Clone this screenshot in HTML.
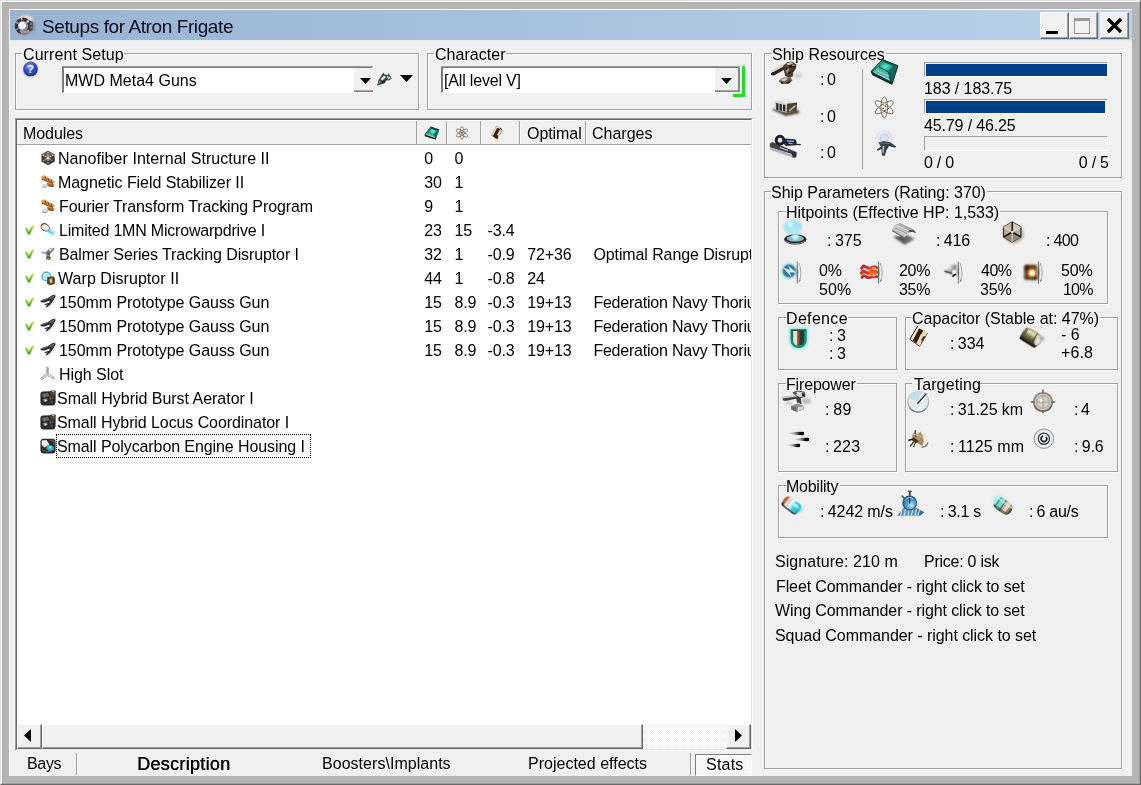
<!DOCTYPE html>
<html><head><meta charset="utf-8"><title>Setups for Atron Frigate</title>
<style>
html,body{margin:0;padding:0}
body{width:1141px;height:785px;position:relative;overflow:hidden;background:#b4b4b4;font-family:"Liberation Sans",sans-serif;font-size:16px;color:#000}
div{box-sizing:content-box}
.abs{position:absolute}
.grp{position:absolute;border:1px solid #a0a0a0;box-shadow:1px 1px 0 #fff, inset 1px 1px 0 #fff}
.glabel{position:absolute;background:#f0f0f0;padding:0 1px;font-size:16px;line-height:18px;white-space:pre}
.btn{position:absolute;background:#f0f0f0;box-sizing:border-box;border:1px solid;border-color:#fff #696969 #696969 #fff;box-shadow:inset -1px -1px 0 #a0a0a0, inset 1px 1px 0 #f0f0f0}
.row{position:absolute;left:17px;height:24px;width:734px}
svg{position:absolute;overflow:visible}
</style></head><body>
<div id="w" style="position:absolute;left:0;top:0;width:1141px;height:785px;will-change:transform;overflow:hidden">

<div class="abs" style="left:0;top:0;width:1141px;height:785px;background:#b4b4b4"></div>
<div class="abs" style="left:0;top:0;width:1140px;height:784px;border-left:1px solid #e3e3e3;border-top:1px solid #e3e3e3;border-right:1px solid #696969;border-bottom:1px solid #696969;box-sizing:border-box;width:1141px;height:785px"></div>
<div class="abs" style="left:1px;top:1px;width:1139px;height:783px;box-sizing:border-box;border-left:1px solid #fff;border-top:1px solid #fff;border-right:1px solid #a0a0a0;border-bottom:1px solid #a0a0a0"></div>
<div class="abs" style="left:9px;top:9px;width:1123px;height:767px;background:#f0f0f0;border-left:1px solid #fff;border-top:1px solid #fff;box-sizing:border-box"></div>
<div class="abs" style="left:10px;top:10px;width:1122px;height:30px;background:linear-gradient(90deg,#99b4d1 0%,#a3bedc 35%,#b9d1ea 100%)"></div>
<div class="abs" style="left:10px;top:40px;width:1122px;height:1px;background:#e4ebf3"></div>
<svg style="left:10px;top:10px" width="30" height="30" viewBox="10 10 30 30"><ellipse cx="25" cy="25" rx="9.4" ry="10" fill="#77707a" opacity="0.55" filter="url(#f12)"/><path d="M18 18 Q25 11.6 33 17.6 L33 22.4 Q25 17 18 21.4Z" fill="#e4dcde" filter="url(#f8)"/><circle cx="23.2" cy="26" r="6.7" fill="none" stroke="#3a3030" stroke-width="3.4" stroke-dasharray="5 1.1" filter="url(#f5)"/><circle cx="22.2" cy="25.6" r="3.8" fill="#f2f3fa" filter="url(#f5)"/><path d="M19.4 31.8 Q24 35.6 30 31.8 L28.6 29.4 Q24 32 20.8 29.8Z" fill="#ac9484" filter="url(#f5)"/><path d="M28.8 20.4 L32.6 21.8 L32.6 30 L29.2 31.2Z" fill="#4a3e3e" filter="url(#f5)"/><rect x="30.4" y="23" width="1.6" height="1.8" fill="#9a8e8e"/><rect x="30.4" y="26.6" width="1.6" height="1.8" fill="#8a7e7e"/><circle cx="17.4" cy="22.6" r="1.1" fill="#9a8e90" filter="url(#f3)"/><circle cx="27.8" cy="21.6" r="1.2" fill="#d4cccc" filter="url(#f3)"/><ellipse cx="33.6" cy="27" rx="1.6" ry="4" fill="#6f7f96" opacity="0.6" filter="url(#f8)"/></svg>
<div style="position:absolute;left:42px;top:16px;font-size:19px;line-height:21px;white-space:pre;color:#0a0a1e;letter-spacing:-0.4px">Setups for Atron Frigate</div>
<div class="btn" style="left:1040px;top:12px;width:29px;height:27px"></div>
<div class="btn" style="left:1069px;top:12px;width:29px;height:27px"></div>
<div class="btn" style="left:1100px;top:12px;width:29px;height:27px"></div>
<div class="abs" style="left:1046px;top:31px;width:12px;height:3px;background:#000"></div>
<div class="abs" style="left:1074px;top:18px;width:16px;height:16px;box-sizing:border-box;border:1px solid #9a9a9a;border-top:3px solid #9a9a9a"></div>
<svg style="left:1106px;top:17px" width="17" height="17" viewBox="0 0 17 17"><path d="M2 2 L15 15 M15 2 L2 15" stroke="#000" stroke-width="3.2" fill="none"/></svg>
<div class="grp" style="left:15px;top:53px;width:402px;height:55px"></div>
<div class="abs" style="left:22px;top:53px;width:102px;height:2px;background:#f0f0f0"></div>
<div style="position:absolute;left:23px;top:46px;font-size:16px;line-height:18px;white-space:pre;letter-spacing:0.080px;transform:scaleY(1.045);transform-origin:0 14.5px;">Current Setup</div>
<svg style="left:21px;top:59px" width="20" height="20" viewBox="21 59 20 20"><defs><radialGradient id="gHelp" cx="42%" cy="32%" r="70%"><stop offset="0" stop-color="#93a8ec"/><stop offset="0.45" stop-color="#3c58c4"/><stop offset="1" stop-color="#1c2e8c"/></radialGradient></defs><ellipse cx="30.8" cy="70.6" rx="7" ry="6.6" fill="#9aa0b8" opacity="0.6" filter="url(#f8)"/><circle cx="30.5" cy="68.9" r="7.4" fill="url(#gHelp)" filter="url(#f3)"/><text x="30.6" y="73.2" text-anchor="middle" font-family="Liberation Sans, sans-serif" font-weight="bold" font-size="11.5" fill="#ffffff">?</text></svg>
<div class="abs" style="left:62px;top:66px;width:311px;height:27px;background:#fff;box-sizing:border-box;border-top:2px solid;border-left:2px solid;border-top-color:#7c7c7c;border-left-color:#7c7c7c;border-bottom:1px solid #fff;border-right:1px solid #fff"></div>
<div class="abs" style="left:62px;top:66px;width:311px;height:1px;background:#9a9a9a"></div>
<div class="abs" style="left:354px;top:68px;width:19px;height:24px;background:#f0f0f0;box-sizing:border-box;border-bottom:2px solid #7e7e7e"></div>
<div class="abs" style="left:354px;top:90px;width:19px;height:1px;background:#a8a8a8"></div>
<div style="position:absolute;left:65px;top:72px;font-size:16px;line-height:18px;white-space:pre;letter-spacing:0.013px;transform:scaleY(1.045);transform-origin:0 14.5px;">MWD Meta4 Guns</div>
<svg style="left:360px;top:78px" width="11" height="6" viewBox="0 0 11 6"><path d="M0 0H11L5.5 6Z" fill="#000"/></svg>
<svg style="left:376px;top:71px" width="16" height="16" viewBox="376 71 16 16"><g filter="url(#f3)"><path d="M377 85.6 L378.6 80 L381.4 75.6 L383.2 72.4 L384.6 74.6 L387.8 75 L388.6 73 L390 75.6 L391.8 78.4 L389.6 80.2 L386 80.6 L384.4 83.4 L380.4 84.6Z" fill="#3c4a45"/><path d="M380.6 79 L384 75.6 L386 77 L382.6 80.4Z" fill="#e2eae6"/><path d="M386.6 76 L389.6 76.4 L390.8 78.4 L388 79.4Z" fill="#b6beba"/><path d="M381 82.4 L385 79.6 L385.4 82.4Z" fill="#18261f"/><path d="M378.4 83.6 L380 81" stroke="#aab2ae" stroke-width="0.9"/></g></svg>
<svg style="left:400px;top:75px" width="13" height="7" viewBox="0 0 13 7"><path d="M0 0H13L6.5 7Z" fill="#000"/></svg>
<div class="grp" style="left:427px;top:53px;width:323px;height:55px"></div>
<div class="abs" style="left:434px;top:53px;width:72px;height:2px;background:#f0f0f0"></div>
<div style="position:absolute;left:435px;top:46px;font-size:16px;line-height:18px;white-space:pre;letter-spacing:0.045px;transform:scaleY(1.045);transform-origin:0 14.5px;">Character</div>
<div class="abs" style="left:441px;top:66px;width:299px;height:27px;background:#fff;box-sizing:border-box;border-top:2px solid;border-left:2px solid;border-top-color:#7c7c7c;border-left-color:#7c7c7c;border-bottom:1px solid #fff;border-right:1px solid #fff"></div>
<div class="abs" style="left:441px;top:66px;width:299px;height:1px;background:#9a9a9a"></div>
<div class="abs" style="left:715px;top:68px;width:25px;height:24px;background:#f0f0f0;box-sizing:border-box;border-bottom:2px solid #7e7e7e"></div>
<div class="abs" style="left:715px;top:90px;width:25px;height:1px;background:#a8a8a8"></div>
<div class="abs" style="left:738px;top:68px;width:2px;height:24px;background:#868686"></div>
<div style="position:absolute;left:444px;top:72px;font-size:16px;line-height:18px;white-space:pre;letter-spacing:-0.178px;transform:scaleY(1.045);transform-origin:0 14.5px;">[All level V]</div>
<svg style="left:721px;top:78px" width="11" height="6" viewBox="0 0 11 6"><path d="M0 0H11L5.5 6Z" fill="#000"/></svg>
<div class="abs" style="left:742px;top:66px;width:3px;height:31px;background:#1de01d"></div>
<div class="abs" style="left:733px;top:94px;width:12px;height:3px;background:#1de01d"></div>
<div class="abs" style="left:15px;top:118px;width:738px;height:633px;box-sizing:border-box;background:#fff;border:1px solid;border-color:#a0a0a0 #fff #fff #a0a0a0"></div>
<div class="abs" style="left:16px;top:119px;width:736px;height:631px;box-sizing:border-box;border:1px solid;border-color:#696969 #e3e3e3 #e3e3e3 #696969"></div>
<div class="abs" style="left:17px;top:120px;width:734px;height:25px;background:#f0f0f0;box-sizing:border-box;border-top:1px solid #fff;border-bottom:1px solid #a0a0a0"></div>
<div class="abs" style="left:416px;top:121px;width:1px;height:23px;background:#a0a0a0"></div>
<div class="abs" style="left:417px;top:121px;width:1px;height:23px;background:#fff"></div>
<div class="abs" style="left:446px;top:121px;width:1px;height:23px;background:#a0a0a0"></div>
<div class="abs" style="left:447px;top:121px;width:1px;height:23px;background:#fff"></div>
<div class="abs" style="left:480px;top:121px;width:1px;height:23px;background:#a0a0a0"></div>
<div class="abs" style="left:481px;top:121px;width:1px;height:23px;background:#fff"></div>
<div class="abs" style="left:519px;top:121px;width:1px;height:23px;background:#a0a0a0"></div>
<div class="abs" style="left:520px;top:121px;width:1px;height:23px;background:#fff"></div>
<div class="abs" style="left:585px;top:121px;width:1px;height:23px;background:#a0a0a0"></div>
<div class="abs" style="left:586px;top:121px;width:1px;height:23px;background:#fff"></div>
<div style="position:absolute;left:23px;top:125px;font-size:16px;line-height:18px;white-space:pre;letter-spacing:-0.072px;transform:scaleY(1.045);transform-origin:0 14.5px;">Modules</div>
<div style="position:absolute;left:527px;top:125px;font-size:16px;line-height:18px;white-space:pre;letter-spacing:-0.063px;transform:scaleY(1.045);transform-origin:0 14.5px;">Optimal</div>
<div style="position:absolute;left:592px;top:125px;font-size:16px;line-height:18px;white-space:pre;transform:scaleY(1.045);transform-origin:0 14.5px;">Charges</div>
<svg style="left:424px;top:125px" width="16" height="16" viewBox="0 0 16 16"><g filter="url(#f3)"><path d="M0.6 9.4 L6.6 1.4 L15.4 4.6 L11.6 14.6 L1.2 11.2Z" fill="#0e423a"/><path d="M4.4 7.6 L7.2 3.4 L13 5.6 L10.2 9.8Z" fill="#2fc09c"/><path d="M6.4 6.8 L8 4.6 L11 5.8 L9.4 8Z" fill="#62f0c8"/><path d="M1.2 9.4 L4.4 7.6 L10.2 9.8 L11.2 13.4Z" fill="#4fb0a2"/><path d="M2.6 9.6 L10.4 12.2" stroke="#b8f0e8" stroke-width="0.7"/><path d="M10.2 9.8 L13 5.6 L15 4.8 L11.6 13.8Z" fill="#156a5e"/><path d="M1 9.6 L6.6 1.8 L7.2 3.4 L4.4 7.6Z" fill="#237e70"/><path d="M6.6 1.6 L15.2 4.8 L13 5.6 L7.2 3.4Z" fill="#0f4a42"/><path d="M0.6 9.4 L1.2 11.2 L11.6 14.6 L11.2 13.2Z" fill="#0c2824"/></g></svg>
<svg style="left:454px;top:125px" width="16" height="16" viewBox="0 0 16 16"><g fill="none" stroke="#7a7068" stroke-width="0.8" filter="url(#f3)"><ellipse cx="8" cy="8" rx="1.9" ry="6.4"/><ellipse cx="8" cy="8" rx="6.6" ry="2.1" transform="rotate(33 8 8)"/><ellipse cx="8" cy="8" rx="6.6" ry="2.1" transform="rotate(-33 8 8)"/></g><circle cx="8" cy="8" r="1" fill="#5a4e44" filter="url(#f3)"/></svg>
<svg style="left:489px;top:125px" width="16" height="16" viewBox="0 0 16 16"><g filter="url(#f3)"><path d="M7.4 0.8 L11.4 2.4 L13.6 5 L8.4 14.6 L2.4 10.4Z" fill="#3a2412"/><path d="M7 1.4 L8.6 2 L3.8 11 L2.6 10.2Z" fill="#f4e4c4"/><path d="M7.4 0.8 L11.4 2.4 L10.8 3.8 L7.2 2.4Z" fill="#e8dcc8"/><path d="M11.2 4 L13.2 5.4 L10.4 9.4 L12.2 9.6 L8.6 14 L9.4 10.4 L8 10Z" fill="#f0e0c0"/></g></svg>
<svg style="left:40px;top:150px" width="16" height="16" viewBox="0 0 16 16"><g filter="url(#f3)"><path d="M8 0.8 L14.6 4.4 L14.6 11.6 L8 15.2 L1.4 11.6 L1.4 4.4Z" fill="#463c34"/><path d="M8 0.8 L14.6 4.4 L8 8 L1.4 4.4Z" fill="#6e645a"/><path d="M8 2 L8 14 M2.6 5 L13.4 11 M13.4 5 L2.6 11" stroke="#d6cebe" stroke-width="1.1" stroke-dasharray="1.6 0.9"/><circle cx="8" cy="8" r="1.4" fill="#e8e2d6"/><path d="M8 15.2 L14.6 11.6 L14.6 8 Z" fill="#2a221c" opacity="0.6"/></g></svg>
<div style="position:absolute;left:58px;top:150px;font-size:16px;line-height:18px;white-space:pre;letter-spacing:0.056px;transform:scaleY(1.045);transform-origin:0 14.5px;">Nanofiber Internal Structure II</div>
<div style="position:absolute;left:424.3px;top:150px;font-size:16px;line-height:18px;white-space:pre;letter-spacing:-0.15px;transform:scaleY(1.045);transform-origin:0 14.5px;">0</div>
<div style="position:absolute;left:454.5px;top:150px;font-size:16px;line-height:18px;white-space:pre;letter-spacing:-0.15px;transform:scaleY(1.045);transform-origin:0 14.5px;">0</div>
<svg style="left:40px;top:174px" width="16" height="16" viewBox="0 0 16 16"><g filter="url(#f3)"><path d="M1.2 2.6 L4 1.2 L15.2 7.4 L13 9.6 L1.8 5.2Z" fill="#d98a3a"/><path d="M2 3 L4 2 L13.6 7.4" fill="none" stroke="#f2c078" stroke-width="0.9"/><path d="M1.8 5.2 L13 9.6" fill="none" stroke="#5c300e" stroke-width="1"/><path d="M5 2.4 L6.2 5.6 M8 4 L9 7 M11 5.6 L11.8 8.6" stroke="#6a3a12" stroke-width="0.9"/><path d="M6.6 8.4 L15 10.8 L13.4 12.8 L7.4 11.6Z" fill="#c87a30"/><path d="M7.4 11.6 L13.4 12.8" stroke="#5c300e" stroke-width="0.9"/><path d="M9.6 9.4 L10 11.8 M12 10 L12.2 12.4" stroke="#6a3a12" stroke-width="0.8"/><ellipse cx="4.6" cy="12" rx="2.8" ry="2" fill="#d4d4d4"/><path d="M2 12.6 Q4.6 15 7.2 12.6 Q4.6 13.8 2 12.6Z" fill="#8c8c8c"/></g></svg>
<div style="position:absolute;left:58px;top:174px;font-size:16px;line-height:18px;white-space:pre;letter-spacing:-0.054px;transform:scaleY(1.045);transform-origin:0 14.5px;">Magnetic Field Stabilizer II</div>
<div style="position:absolute;left:424.3px;top:174px;font-size:16px;line-height:18px;white-space:pre;letter-spacing:-0.15px;transform:scaleY(1.045);transform-origin:0 14.5px;">30</div>
<div style="position:absolute;left:454.5px;top:174px;font-size:16px;line-height:18px;white-space:pre;letter-spacing:-0.15px;transform:scaleY(1.045);transform-origin:0 14.5px;">1</div>
<svg style="left:40px;top:198px" width="16" height="16" viewBox="0 0 16 16"><g filter="url(#f3)"><path d="M1.2 2.6 L4 1.2 L15.2 7.4 L13 9.6 L1.8 5.2Z" fill="#d98a3a"/><path d="M2 3 L4 2 L13.6 7.4" fill="none" stroke="#f2c078" stroke-width="0.9"/><path d="M1.8 5.2 L13 9.6" fill="none" stroke="#5c300e" stroke-width="1"/><path d="M5 2.4 L6.2 5.6 M8 4 L9 7 M11 5.6 L11.8 8.6" stroke="#6a3a12" stroke-width="0.9"/><path d="M6.6 8.4 L15 10.8 L13.4 12.8 L7.4 11.6Z" fill="#c87a30"/><path d="M7.4 11.6 L13.4 12.8" stroke="#5c300e" stroke-width="0.9"/><path d="M9.6 9.4 L10 11.8 M12 10 L12.2 12.4" stroke="#6a3a12" stroke-width="0.8"/><ellipse cx="4.9" cy="12.8" rx="3.3" ry="2.5" fill="#d6d6d6"/><path d="M1.8 13.4 Q4.9 16.4 8 13.4 Q4.9 15 1.8 13.4Z" fill="#8a8a8a"/></g></svg>
<div style="position:absolute;left:59px;top:198px;font-size:16px;line-height:18px;white-space:pre;letter-spacing:-0.116px;transform:scaleY(1.045);transform-origin:0 14.5px;">Fourier Transform Tracking Program</div>
<div style="position:absolute;left:424.3px;top:198px;font-size:16px;line-height:18px;white-space:pre;letter-spacing:-0.15px;transform:scaleY(1.045);transform-origin:0 14.5px;">9</div>
<div style="position:absolute;left:454.5px;top:198px;font-size:16px;line-height:18px;white-space:pre;letter-spacing:-0.15px;transform:scaleY(1.045);transform-origin:0 14.5px;">1</div>
<svg style="left:25px;top:225px" width="10" height="11" viewBox="0 0 10 11"><path d="M1.3 3.6 L3.9 8.4 L7.9 1.2" fill="none" stroke="url(#gChk)" stroke-width="2.5" stroke-linecap="round" stroke-linejoin="round" filter="url(#f3)"/><path d="M1.6 3.8 L3.6 7" fill="none" stroke="#d4f08c" stroke-width="0.8" stroke-linecap="round" opacity="0.8"/></svg>
<svg style="left:40px;top:222px" width="16" height="16" viewBox="0 0 16 16"><ellipse cx="10.6" cy="9.6" rx="5" ry="3.2" fill="#8fe6f0" opacity="0.75" transform="rotate(32 10.6 9.6)" filter="url(#f8)"/><g filter="url(#f3)"><ellipse cx="5.2" cy="5.4" rx="4.4" ry="3.3" fill="#f6f2ee" stroke="#8a5a44" stroke-width="1" transform="rotate(30 5.2 5.4)"/><path d="M1.4 3.6 Q3 1.2 5.6 1.6" fill="none" stroke="#5a3424" stroke-width="1.1"/><ellipse cx="6.4" cy="6.2" rx="2.2" ry="1.6" fill="#d8f6fa" transform="rotate(30 6.4 6.2)"/><path d="M7.4 8.6 L13.4 11.6" stroke="#4cc8d8" stroke-width="1.4"/></g></svg>
<div style="position:absolute;left:59px;top:222px;font-size:16px;line-height:18px;white-space:pre;letter-spacing:-0.203px;transform:scaleY(1.045);transform-origin:0 14.5px;">Limited 1MN Microwarpdrive I</div>
<div style="position:absolute;left:424.3px;top:222px;font-size:16px;line-height:18px;white-space:pre;letter-spacing:-0.15px;transform:scaleY(1.045);transform-origin:0 14.5px;">23</div>
<div style="position:absolute;left:454.5px;top:222px;font-size:16px;line-height:18px;white-space:pre;letter-spacing:-0.15px;transform:scaleY(1.045);transform-origin:0 14.5px;">15</div>
<div style="position:absolute;left:487.6px;top:222px;font-size:16px;line-height:18px;white-space:pre;letter-spacing:-0.15px;transform:scaleY(1.045);transform-origin:0 14.5px;">-3.4</div>
<svg style="left:25px;top:249px" width="10" height="11" viewBox="0 0 10 11"><path d="M1.3 3.6 L3.9 8.4 L7.9 1.2" fill="none" stroke="url(#gChk)" stroke-width="2.5" stroke-linecap="round" stroke-linejoin="round" filter="url(#f3)"/><path d="M1.6 3.8 L3.6 7" fill="none" stroke="#d4f08c" stroke-width="0.8" stroke-linecap="round" opacity="0.8"/></svg>
<svg style="left:40px;top:246px" width="16" height="16" viewBox="0 0 16 16"><g filter="url(#f3)"><path d="M0.8 5.6 L5.6 6.2 L8.6 3.4 L11 1.8 L14.8 2.2 L13.4 4.6 L10.6 7.2 L9.8 10.2 L6.6 10 L6 7.8 L2.4 7.6Z" fill="#7c7c7a"/><path d="M8.6 3.6 L11 2.2 L13.8 2.6 L10.2 5.2Z" fill="#d4d4d0"/><path d="M1.2 5.8 L5.6 6.6 L6 7.4 L2.6 7.2Z" fill="#b4b4b0"/><path d="M6.8 10 L10 10.2 L11.4 12.6 L9 14 L5.8 13 Z" fill="#5c4a3c"/><path d="M6.6 12.4 L10.8 12.6" stroke="#b09880" stroke-width="0.9"/><path d="M7.6 6 L9.4 8.6" stroke="#3a3a38" stroke-width="1"/></g></svg>
<div style="position:absolute;left:59px;top:246px;font-size:16px;line-height:18px;white-space:pre;letter-spacing:-0.114px;transform:scaleY(1.045);transform-origin:0 14.5px;">Balmer Series Tracking Disruptor I</div>
<div style="position:absolute;left:424.3px;top:246px;font-size:16px;line-height:18px;white-space:pre;letter-spacing:-0.15px;transform:scaleY(1.045);transform-origin:0 14.5px;">32</div>
<div style="position:absolute;left:454.5px;top:246px;font-size:16px;line-height:18px;white-space:pre;letter-spacing:-0.15px;transform:scaleY(1.045);transform-origin:0 14.5px;">1</div>
<div style="position:absolute;left:487.6px;top:246px;font-size:16px;line-height:18px;white-space:pre;letter-spacing:-0.15px;transform:scaleY(1.045);transform-origin:0 14.5px;">-0.9</div>
<div style="position:absolute;left:527.3px;top:246px;font-size:16px;line-height:18px;white-space:pre;letter-spacing:-0.15px;transform:scaleY(1.045);transform-origin:0 14.5px;">72+36</div>
<div class="abs" style="left:593.4px;top:246px;width:157.6px;height:18px;overflow:hidden;font-size:16px;line-height:18px;white-space:pre;letter-spacing:-0.1px;transform:scaleY(1.045);transform-origin:0 14.5px;">Optimal Range Disruption</div>
<svg style="left:25px;top:273px" width="10" height="11" viewBox="0 0 10 11"><path d="M1.3 3.6 L3.9 8.4 L7.9 1.2" fill="none" stroke="url(#gChk)" stroke-width="2.5" stroke-linecap="round" stroke-linejoin="round" filter="url(#f3)"/><path d="M1.6 3.8 L3.6 7" fill="none" stroke="#d4f08c" stroke-width="0.8" stroke-linecap="round" opacity="0.8"/></svg>
<svg style="left:40px;top:270px" width="16" height="16" viewBox="0 0 16 16"><circle cx="6.4" cy="6.4" r="5.4" fill="#a8ecf4" opacity="0.7" filter="url(#f5)"/><g filter="url(#f3)"><circle cx="6.4" cy="6.4" r="4.2" fill="#e6fafc" stroke="#4cc0d4" stroke-width="1.5"/><circle cx="6.2" cy="6.6" r="1.6" fill="none" stroke="#64c8d8" stroke-width="0.8"/><path d="M7.4 7 L13.8 6.4 L15 9 L14.6 14 L10 15.2 L7 13.4Z" fill="#4a3a2c"/><path d="M9 8.6 L12.6 8 L12.8 13 L9.6 13.6Z" fill="#b8843c"/><path d="M10 9.4 L11.6 9.2 L11.8 12.2 L10.4 12.4Z" fill="#f0d8a0"/></g></svg>
<div style="position:absolute;left:58px;top:270px;font-size:16px;line-height:18px;white-space:pre;letter-spacing:0.049px;transform:scaleY(1.045);transform-origin:0 14.5px;">Warp Disruptor II</div>
<div style="position:absolute;left:424.3px;top:270px;font-size:16px;line-height:18px;white-space:pre;letter-spacing:-0.15px;transform:scaleY(1.045);transform-origin:0 14.5px;">44</div>
<div style="position:absolute;left:454.5px;top:270px;font-size:16px;line-height:18px;white-space:pre;letter-spacing:-0.15px;transform:scaleY(1.045);transform-origin:0 14.5px;">1</div>
<div style="position:absolute;left:487.6px;top:270px;font-size:16px;line-height:18px;white-space:pre;letter-spacing:-0.15px;transform:scaleY(1.045);transform-origin:0 14.5px;">-0.8</div>
<div style="position:absolute;left:527.3px;top:270px;font-size:16px;line-height:18px;white-space:pre;letter-spacing:-0.15px;transform:scaleY(1.045);transform-origin:0 14.5px;">24</div>
<svg style="left:25px;top:297px" width="10" height="11" viewBox="0 0 10 11"><path d="M1.3 3.6 L3.9 8.4 L7.9 1.2" fill="none" stroke="url(#gChk)" stroke-width="2.5" stroke-linecap="round" stroke-linejoin="round" filter="url(#f3)"/><path d="M1.6 3.8 L3.6 7" fill="none" stroke="#d4f08c" stroke-width="0.8" stroke-linecap="round" opacity="0.8"/></svg>
<svg style="left:40px;top:294px" width="16" height="16" viewBox="0 0 16 16"><g filter="url(#f3)"><path d="M0.4 6.6 L8.4 3.8 L11.4 1.6 L14.8 0.8 L15.6 2.2 L14 5.6 L10.4 10.8 L6.6 13.6 L5.6 12.6 L9.4 8.4 L9.8 6.4 L4.6 8.6 L1 8.4Z" fill="#2c2c2c"/><path d="M9.4 4 L12 2.2 L14.6 1.6 L13.2 4.4 L10.6 6Z" fill="#66625e"/><path d="M1 7 L8 4.6" stroke="#8c8c8c" stroke-width="0.8"/><path d="M4.8 10.6 L9 9.4" stroke="#2c2c2c" stroke-width="1.3"/><path d="M12.6 7.6 L15.4 6.4 L13.4 9.2Z" fill="#c4c0bc" opacity="0.8"/></g></svg>
<div style="position:absolute;left:59px;top:294px;font-size:16px;line-height:18px;white-space:pre;letter-spacing:-0.057px;transform:scaleY(1.045);transform-origin:0 14.5px;">150mm Prototype Gauss Gun</div>
<div style="position:absolute;left:424.3px;top:294px;font-size:16px;line-height:18px;white-space:pre;letter-spacing:-0.15px;transform:scaleY(1.045);transform-origin:0 14.5px;">15</div>
<div style="position:absolute;left:454.5px;top:294px;font-size:16px;line-height:18px;white-space:pre;letter-spacing:-0.15px;transform:scaleY(1.045);transform-origin:0 14.5px;">8.9</div>
<div style="position:absolute;left:487.6px;top:294px;font-size:16px;line-height:18px;white-space:pre;letter-spacing:-0.15px;transform:scaleY(1.045);transform-origin:0 14.5px;">-0.3</div>
<div style="position:absolute;left:527.3px;top:294px;font-size:16px;line-height:18px;white-space:pre;letter-spacing:-0.15px;transform:scaleY(1.045);transform-origin:0 14.5px;">19+13</div>
<div class="abs" style="left:593.4px;top:294px;width:157.6px;height:18px;overflow:hidden;font-size:16px;line-height:18px;white-space:pre;letter-spacing:-0.22px;transform:scaleY(1.045);transform-origin:0 14.5px;">Federation Navy Thorium Charge S</div>
<svg style="left:25px;top:321px" width="10" height="11" viewBox="0 0 10 11"><path d="M1.3 3.6 L3.9 8.4 L7.9 1.2" fill="none" stroke="url(#gChk)" stroke-width="2.5" stroke-linecap="round" stroke-linejoin="round" filter="url(#f3)"/><path d="M1.6 3.8 L3.6 7" fill="none" stroke="#d4f08c" stroke-width="0.8" stroke-linecap="round" opacity="0.8"/></svg>
<svg style="left:40px;top:318px" width="16" height="16" viewBox="0 0 16 16"><g filter="url(#f3)"><path d="M0.4 6.6 L8.4 3.8 L11.4 1.6 L14.8 0.8 L15.6 2.2 L14 5.6 L10.4 10.8 L6.6 13.6 L5.6 12.6 L9.4 8.4 L9.8 6.4 L4.6 8.6 L1 8.4Z" fill="#2c2c2c"/><path d="M9.4 4 L12 2.2 L14.6 1.6 L13.2 4.4 L10.6 6Z" fill="#66625e"/><path d="M1 7 L8 4.6" stroke="#8c8c8c" stroke-width="0.8"/><path d="M4.8 10.6 L9 9.4" stroke="#2c2c2c" stroke-width="1.3"/><path d="M12.6 7.6 L15.4 6.4 L13.4 9.2Z" fill="#c4c0bc" opacity="0.8"/></g></svg>
<div style="position:absolute;left:59px;top:318px;font-size:16px;line-height:18px;white-space:pre;letter-spacing:-0.057px;transform:scaleY(1.045);transform-origin:0 14.5px;">150mm Prototype Gauss Gun</div>
<div style="position:absolute;left:424.3px;top:318px;font-size:16px;line-height:18px;white-space:pre;letter-spacing:-0.15px;transform:scaleY(1.045);transform-origin:0 14.5px;">15</div>
<div style="position:absolute;left:454.5px;top:318px;font-size:16px;line-height:18px;white-space:pre;letter-spacing:-0.15px;transform:scaleY(1.045);transform-origin:0 14.5px;">8.9</div>
<div style="position:absolute;left:487.6px;top:318px;font-size:16px;line-height:18px;white-space:pre;letter-spacing:-0.15px;transform:scaleY(1.045);transform-origin:0 14.5px;">-0.3</div>
<div style="position:absolute;left:527.3px;top:318px;font-size:16px;line-height:18px;white-space:pre;letter-spacing:-0.15px;transform:scaleY(1.045);transform-origin:0 14.5px;">19+13</div>
<div class="abs" style="left:593.4px;top:318px;width:157.6px;height:18px;overflow:hidden;font-size:16px;line-height:18px;white-space:pre;letter-spacing:-0.22px;transform:scaleY(1.045);transform-origin:0 14.5px;">Federation Navy Thorium Charge S</div>
<svg style="left:25px;top:345px" width="10" height="11" viewBox="0 0 10 11"><path d="M1.3 3.6 L3.9 8.4 L7.9 1.2" fill="none" stroke="url(#gChk)" stroke-width="2.5" stroke-linecap="round" stroke-linejoin="round" filter="url(#f3)"/><path d="M1.6 3.8 L3.6 7" fill="none" stroke="#d4f08c" stroke-width="0.8" stroke-linecap="round" opacity="0.8"/></svg>
<svg style="left:40px;top:342px" width="16" height="16" viewBox="0 0 16 16"><g filter="url(#f3)"><path d="M0.4 6.6 L8.4 3.8 L11.4 1.6 L14.8 0.8 L15.6 2.2 L14 5.6 L10.4 10.8 L6.6 13.6 L5.6 12.6 L9.4 8.4 L9.8 6.4 L4.6 8.6 L1 8.4Z" fill="#2c2c2c"/><path d="M9.4 4 L12 2.2 L14.6 1.6 L13.2 4.4 L10.6 6Z" fill="#66625e"/><path d="M1 7 L8 4.6" stroke="#8c8c8c" stroke-width="0.8"/><path d="M4.8 10.6 L9 9.4" stroke="#2c2c2c" stroke-width="1.3"/><path d="M12.6 7.6 L15.4 6.4 L13.4 9.2Z" fill="#c4c0bc" opacity="0.8"/></g></svg>
<div style="position:absolute;left:59px;top:342px;font-size:16px;line-height:18px;white-space:pre;letter-spacing:-0.057px;transform:scaleY(1.045);transform-origin:0 14.5px;">150mm Prototype Gauss Gun</div>
<div style="position:absolute;left:424.3px;top:342px;font-size:16px;line-height:18px;white-space:pre;letter-spacing:-0.15px;transform:scaleY(1.045);transform-origin:0 14.5px;">15</div>
<div style="position:absolute;left:454.5px;top:342px;font-size:16px;line-height:18px;white-space:pre;letter-spacing:-0.15px;transform:scaleY(1.045);transform-origin:0 14.5px;">8.9</div>
<div style="position:absolute;left:487.6px;top:342px;font-size:16px;line-height:18px;white-space:pre;letter-spacing:-0.15px;transform:scaleY(1.045);transform-origin:0 14.5px;">-0.3</div>
<div style="position:absolute;left:527.3px;top:342px;font-size:16px;line-height:18px;white-space:pre;letter-spacing:-0.15px;transform:scaleY(1.045);transform-origin:0 14.5px;">19+13</div>
<div class="abs" style="left:593.4px;top:342px;width:157.6px;height:18px;overflow:hidden;font-size:16px;line-height:18px;white-space:pre;letter-spacing:-0.22px;transform:scaleY(1.045);transform-origin:0 14.5px;">Federation Navy Thorium Charge S</div>
<svg style="left:40px;top:366px" width="16" height="16" viewBox="0 0 16 16"><g filter="url(#f3)" fill="none" stroke-linecap="round"><path d="M7.2 2 L7.2 8.4 L1.8 12.6 M7.2 8.4 L13.6 11.8" stroke="#9c9c9c" stroke-width="2.6"/><path d="M7.2 2 L7.2 8.4 L1.8 12.6 M7.2 8.4 L13.6 11.8" stroke="#e4e4e4" stroke-width="1.2"/><path d="M7.9 2.4 L7.9 8" stroke="#6e6e6e" stroke-width="0.7"/></g></svg>
<div style="position:absolute;left:59px;top:366px;font-size:16px;line-height:18px;white-space:pre;letter-spacing:-0.049px;transform:scaleY(1.045);transform-origin:0 14.5px;">High Slot</div>
<svg style="left:40px;top:390px" width="16" height="16" viewBox="0 0 16 16"><g filter="url(#f3)"><path d="M2.6 1.4 L10 1.2 L12 0.2 L15.6 0.6 L15.6 12.6 Q15.4 15.2 12.8 15.4 L3 15.4 Q0.6 15.2 0.4 12.8 L0.4 3.8 Q0.6 1.6 2.6 1.4Z" fill="#2a2a2a"/><path d="M9.4 1.4 L15.2 1 L15.2 5.4 L11.6 5.8Z" fill="#5c4434"/><path d="M11.4 0.6 L15 0.8 L13 2.6Z" fill="#c8c8c8"/><path d="M2 4 L8 3 L9.4 6 L3 7.4Z" fill="#6c6c6a"/><path d="M3 9 L7 8.4 L7.6 11 L4 12Z" fill="#8a8a88"/><circle cx="5.6" cy="10.4" r="1" fill="#dcdcdc"/><circle cx="10.6" cy="8.6" r="0.9" fill="#767674"/><circle cx="11.6" cy="12" r="1" fill="#5a5a58"/><path d="M8.6 6.6 L13 7 L12.6 9.6" fill="none" stroke="#4e4e4c" stroke-width="1"/></g></svg>
<div style="position:absolute;left:57px;top:390px;font-size:16px;line-height:18px;white-space:pre;letter-spacing:-0.027px;transform:scaleY(1.045);transform-origin:0 14.5px;">Small Hybrid Burst Aerator I</div>
<svg style="left:40px;top:414px" width="16" height="16" viewBox="0 0 16 16"><g filter="url(#f3)"><path d="M2.6 1.4 L10 1.2 L12 0.2 L15.6 0.6 L15.6 12.6 Q15.4 15.2 12.8 15.4 L3 15.4 Q0.6 15.2 0.4 12.8 L0.4 3.8 Q0.6 1.6 2.6 1.4Z" fill="#2a2a2a"/><path d="M9.4 1.4 L15.2 1 L15.2 5.4 L11.6 5.8Z" fill="#5c4434"/><path d="M11.4 0.6 L15 0.8 L13 2.6Z" fill="#c8c8c8"/><path d="M2 4 L8 3 L9.4 6 L3 7.4Z" fill="#6c6c6a"/><path d="M3 9 L7 8.4 L7.6 11 L4 12Z" fill="#8a8a88"/><circle cx="5.6" cy="10.4" r="1" fill="#dcdcdc"/><circle cx="10.6" cy="8.6" r="0.9" fill="#767674"/><circle cx="11.6" cy="12" r="1" fill="#5a5a58"/><path d="M8.6 6.6 L13 7 L12.6 9.6" fill="none" stroke="#4e4e4c" stroke-width="1"/></g></svg>
<div style="position:absolute;left:57px;top:414px;font-size:16px;line-height:18px;white-space:pre;letter-spacing:-0.086px;transform:scaleY(1.045);transform-origin:0 14.5px;">Small Hybrid Locus Coordinator I</div>
<svg style="left:40px;top:438px" width="16" height="16" viewBox="0 0 16 16"><g filter="url(#f3)"><path d="M3 0.8 L13 0.8 Q15.4 1 15.6 3.4 L15.6 12.6 Q15.4 15.2 12.8 15.4 L3 15.4 Q0.6 15.2 0.4 12.8 L0.4 3.4 Q0.6 1 3 0.8Z" fill="#2c2c2c"/><path d="M1.6 2.6 L6.4 2 L9.4 6.6 L4.6 9.6 L1.6 7Z" fill="#f0f0f0"/><path d="M7.6 6.6 L13.4 8.2 L13.8 11.6 L9.6 13.4 L6.2 10.4Z" fill="#2cb8cc"/><path d="M8.6 8 L11.6 9 L10 11Z" fill="#9cf0f8"/><path d="M2 12 Q8 15 14 12.4" fill="none" stroke="#5a5a5a" stroke-width="1"/><path d="M10 2.4 L14 3 L14 6.4" fill="none" stroke="#6a6a6a" stroke-width="1"/></g></svg>
<div style="position:absolute;left:57px;top:438px;font-size:16px;line-height:18px;white-space:pre;letter-spacing:-0.093px;transform:scaleY(1.045);transform-origin:0 14.5px;">Small Polycarbon Engine Housing I</div>
<div class="abs" style="left:56px;top:434px;width:255px;height:24px;border:1px dotted #000;box-sizing:border-box"></div>
<div class="abs" style="left:17px;top:724px;width:734px;height:25px;background:repeating-conic-gradient(#ffffff 0% 25%, #f0f0f0 0% 50%) 0 0/2px 2px"></div>
<div class="btn" style="left:17px;top:724px;width:25px;height:25px"></div>
<div class="btn" style="left:726px;top:724px;width:25px;height:25px"></div>
<div class="btn" style="left:42px;top:724px;width:601px;height:25px"></div>
<svg style="left:24px;top:729px" width="7" height="13" viewBox="0 0 7 13"><path d="M7 0V13L0 6.5Z" fill="#000"/></svg>
<svg style="left:735px;top:729px" width="7" height="13" viewBox="0 0 7 13"><path d="M0 0V13L7 6.5Z" fill="#000"/></svg>
<div style="position:absolute;left:27px;top:755px;font-size:16px;line-height:18px;white-space:pre;letter-spacing:-0.343px;transform:scaleY(1.045);transform-origin:0 14.5px;">Bays</div>
<div class="abs" style="left:76px;top:753px;width:1px;height:22px;background:#a0a0a0"></div>
<div class="abs" style="left:77px;top:753px;width:1px;height:22px;background:#fff"></div>
<div style="position:absolute;left:137px;top:754px;font-size:18px;line-height:20px;white-space:pre;text-shadow:0.4px 0 0 #000;letter-spacing:0.3px">Description</div>
<div style="position:absolute;left:322px;top:755px;font-size:16px;line-height:18px;white-space:pre;letter-spacing:0.035px;transform:scaleY(1.045);transform-origin:0 14.5px;">Boosters\Implants</div>
<div style="position:absolute;left:528px;top:755px;font-size:16px;line-height:18px;white-space:pre;letter-spacing:0.010px;transform:scaleY(1.045);transform-origin:0 14.5px;">Projected effects</div>
<div class="abs" style="left:690px;top:753px;width:1px;height:22px;background:#a0a0a0"></div>
<div class="abs" style="left:691px;top:753px;width:1px;height:22px;background:#fff"></div>
<div class="abs" style="left:695px;top:754px;width:57px;height:22px;box-sizing:border-box;background:#f8f8f8;border:1px solid;border-color:#808080 #fff #fff #808080"></div>
<div style="position:absolute;left:706px;top:756px;font-size:16px;line-height:18px;white-space:pre;letter-spacing:0.219px;transform:scaleY(1.045);transform-origin:0 14.5px;">Stats</div>
<div class="grp" style="left:764px;top:53px;width:356px;height:123px"></div>
<div class="abs" style="left:772px;top:53px;width:114px;height:2px;background:#f0f0f0"></div>
<div style="position:absolute;left:772px;top:46px;font-size:16px;line-height:18px;white-space:pre;letter-spacing:-0.011px;transform:scaleY(1.045);transform-origin:0 14.5px;">Ship Resources</div>
<div class="abs" style="left:862px;top:69px;width:1px;height:100px;background:#a0a0a0"></div>
<div style="position:absolute;left:820px;top:71px;font-size:16px;line-height:18px;white-space:pre;letter-spacing:-0.800px;transform:scaleY(1.045);transform-origin:0 14.5px;">:<span style="letter-spacing:-1.0px"> </span>0</div>
<div style="position:absolute;left:820px;top:108px;font-size:16px;line-height:18px;white-space:pre;letter-spacing:-0.800px;transform:scaleY(1.045);transform-origin:0 14.5px;">:<span style="letter-spacing:-1.0px"> </span>0</div>
<div style="position:absolute;left:820px;top:144px;font-size:16px;line-height:18px;white-space:pre;letter-spacing:-0.800px;transform:scaleY(1.045);transform-origin:0 14.5px;">:<span style="letter-spacing:-1.0px"> </span>0</div>
<div class="abs" style="left:924px;top:62px;width:184px;height:15px;box-sizing:border-box;border:1px solid;border-color:#a0a0a0 #fff #fff #a0a0a0"></div>
<div class="abs" style="left:926px;top:64px;width:181px;height:12px;background:#003f87"></div>
<div class="abs" style="left:924px;top:99px;width:184px;height:15px;box-sizing:border-box;border:1px solid;border-color:#a0a0a0 #fff #fff #a0a0a0"></div>
<div class="abs" style="left:926px;top:101px;width:179px;height:12px;background:#003f87"></div>
<div class="abs" style="left:924px;top:136px;width:184px;height:15px;box-sizing:border-box;border:1px solid;border-color:#a0a0a0 #fff #fff #a0a0a0"></div>
<div style="position:absolute;left:924px;top:80px;font-size:16px;line-height:18px;white-space:pre;letter-spacing:-0.069px;transform:scaleY(1.045);transform-origin:0 14.5px;">183 / 183.75</div>
<div style="position:absolute;left:924px;top:117px;font-size:16px;line-height:18px;white-space:pre;letter-spacing:-0.139px;transform:scaleY(1.045);transform-origin:0 14.5px;">45.79 / 46.25</div>
<div style="position:absolute;left:924px;top:154px;font-size:16px;line-height:18px;white-space:pre;letter-spacing:-0.275px;transform:scaleY(1.045);transform-origin:0 14.5px;">0 / 0</div>
<div style="position:absolute;right:32px;top:154px;font-size:16px;line-height:18px;white-space:pre;word-spacing:-0.5px;transform:scaleY(1.045);transform-origin:0 14.5px;">0 / 5</div>
<div class="grp" style="left:764px;top:191px;width:356px;height:576px"></div>
<div class="abs" style="left:771px;top:191px;width:216px;height:2px;background:#f0f0f0"></div>
<div style="position:absolute;left:771px;top:184px;font-size:16px;line-height:18px;white-space:pre;letter-spacing:-0.042px;transform:scaleY(1.045);transform-origin:0 14.5px;">Ship Parameters (Rating: 370)</div>
<div class="grp" style="left:778px;top:211px;width:328px;height:91px"></div>
<div class="abs" style="left:786px;top:211px;width:214px;height:2px;background:#f0f0f0"></div>
<div style="position:absolute;left:786px;top:204px;font-size:16px;line-height:18px;white-space:pre;letter-spacing:-0.029px;transform:scaleY(1.045);transform-origin:0 14.5px;">Hitpoints (Effective HP: 1,533)</div>
<div style="position:absolute;left:827px;top:232px;font-size:16px;line-height:18px;white-space:pre;letter-spacing:0.024px;transform:scaleY(1.045);transform-origin:0 14.5px;">:<span style="letter-spacing:-1.0px"> </span>375</div>
<div style="position:absolute;left:936px;top:232px;font-size:16px;line-height:18px;white-space:pre;letter-spacing:-0.161px;transform:scaleY(1.045);transform-origin:0 14.5px;">:<span style="letter-spacing:-1.0px"> </span>416</div>
<div style="position:absolute;left:1046px;top:232px;font-size:16px;line-height:18px;white-space:pre;letter-spacing:-0.533px;transform:scaleY(1.045);transform-origin:0 14.5px;">:<span style="letter-spacing:-1.0px"> </span>400</div>
<div style="position:absolute;left:819px;top:262px;font-size:16px;line-height:18px;white-space:pre;letter-spacing:-0.137px;transform:scaleY(1.045);transform-origin:0 14.5px;">0%</div>
<div style="position:absolute;left:819px;top:281px;font-size:16px;line-height:18px;white-space:pre;letter-spacing:0.114px;transform:scaleY(1.045);transform-origin:0 14.5px;">50%</div>
<div style="position:absolute;left:899px;top:262px;font-size:16px;line-height:18px;white-space:pre;letter-spacing:-0.286px;transform:scaleY(1.045);transform-origin:0 14.5px;">20%</div>
<div style="position:absolute;left:899px;top:281px;font-size:16px;line-height:18px;white-space:pre;letter-spacing:-0.286px;transform:scaleY(1.045);transform-origin:0 14.5px;">35%</div>
<div style="position:absolute;left:981px;top:262px;font-size:16px;line-height:18px;white-space:pre;letter-spacing:-0.492px;transform:scaleY(1.045);transform-origin:0 14.5px;">40%</div>
<div style="position:absolute;left:980px;top:281px;font-size:16px;line-height:18px;white-space:pre;letter-spacing:-0.186px;transform:scaleY(1.045);transform-origin:0 14.5px;">35%</div>
<div style="position:absolute;left:1061px;top:262px;font-size:16px;line-height:18px;white-space:pre;letter-spacing:-0.186px;transform:scaleY(1.045);transform-origin:0 14.5px;">50%</div>
<div style="position:absolute;left:1063px;top:281px;font-size:16px;line-height:18px;white-space:pre;letter-spacing:-0.800px;transform:scaleY(1.045);transform-origin:0 14.5px;">10%</div>
<div class="grp" style="left:778px;top:317px;width:117px;height:51px"></div>
<div class="abs" style="left:786px;top:317px;width:62px;height:2px;background:#f0f0f0"></div>
<div style="position:absolute;left:786px;top:310px;font-size:16px;line-height:18px;white-space:pre;letter-spacing:0.328px;transform:scaleY(1.045);transform-origin:0 14.5px;">Defence</div>
<div style="position:absolute;left:829px;top:327px;font-size:16px;line-height:18px;white-space:pre;letter-spacing:-0.022px;transform:scaleY(1.045);transform-origin:0 14.5px;">:<span style="letter-spacing:-1.0px"> </span>3</div>
<div style="position:absolute;left:829px;top:345px;font-size:16px;line-height:18px;white-space:pre;letter-spacing:-0.022px;transform:scaleY(1.045);transform-origin:0 14.5px;">:<span style="letter-spacing:-1.0px"> </span>3</div>
<div class="grp" style="left:905px;top:317px;width:211px;height:51px"></div>
<div class="abs" style="left:912px;top:317px;width:188px;height:2px;background:#f0f0f0"></div>
<div style="position:absolute;left:912px;top:310px;font-size:16px;line-height:18px;white-space:pre;letter-spacing:-0.022px;transform:scaleY(1.045);transform-origin:0 14.5px;">Capacitor (Stable at: 47%)</div>
<div style="position:absolute;left:950px;top:335px;font-size:16px;line-height:18px;white-space:pre;letter-spacing:-0.074px;transform:scaleY(1.045);transform-origin:0 14.5px;">:<span style="letter-spacing:-1.0px"> </span>334</div>
<div style="position:absolute;left:1061px;top:326px;font-size:16px;line-height:18px;white-space:pre;letter-spacing:-0.069px;transform:scaleY(1.045);transform-origin:0 14.5px;">- 6</div>
<div style="position:absolute;left:1061px;top:344px;font-size:16px;line-height:18px;white-space:pre;letter-spacing:0.095px;transform:scaleY(1.045);transform-origin:0 14.5px;">+6.8</div>
<div class="grp" style="left:778px;top:383px;width:117px;height:87px"></div>
<div class="abs" style="left:786px;top:383px;width:71px;height:2px;background:#f0f0f0"></div>
<div style="position:absolute;left:786px;top:376px;font-size:16px;line-height:18px;white-space:pre;letter-spacing:-0.169px;transform:scaleY(1.045);transform-origin:0 14.5px;">Firepower</div>
<div style="position:absolute;left:825px;top:401px;font-size:16px;line-height:18px;white-space:pre;letter-spacing:0.324px;transform:scaleY(1.045);transform-origin:0 14.5px;">:<span style="letter-spacing:-1.0px"> </span>89</div>
<div style="position:absolute;left:825px;top:438px;font-size:16px;line-height:18px;white-space:pre;letter-spacing:0.163px;transform:scaleY(1.045);transform-origin:0 14.5px;">:<span style="letter-spacing:-1.0px"> </span>223</div>
<div class="grp" style="left:905px;top:383px;width:211px;height:87px"></div>
<div class="abs" style="left:912px;top:383px;width:68px;height:2px;background:#f0f0f0"></div>
<div style="position:absolute;left:914px;top:376px;font-size:16px;line-height:18px;white-space:pre;letter-spacing:0.132px;transform:scaleY(1.045);transform-origin:0 14.5px;">Targeting</div>
<div style="position:absolute;left:950px;top:401px;font-size:16px;line-height:18px;white-space:pre;letter-spacing:-0.073px;transform:scaleY(1.045);transform-origin:0 14.5px;">:<span style="letter-spacing:-1.0px"> </span>31.25 km</div>
<div style="position:absolute;left:1074px;top:401px;font-size:16px;line-height:18px;white-space:pre;letter-spacing:-0.800px;transform:scaleY(1.045);transform-origin:0 14.5px;">:<span style="letter-spacing:-1.0px"> </span>4</div>
<div style="position:absolute;left:950px;top:438px;font-size:16px;line-height:18px;white-space:pre;letter-spacing:0.100px;transform:scaleY(1.045);transform-origin:0 14.5px;">:<span style="letter-spacing:-1.0px"> </span>1125 mm</div>
<div style="position:absolute;left:1074px;top:438px;font-size:16px;line-height:18px;white-space:pre;letter-spacing:-0.201px;transform:scaleY(1.045);transform-origin:0 14.5px;">:<span style="letter-spacing:-1.0px"> </span>9.6</div>
<div class="grp" style="left:778px;top:485px;width:328px;height:51px"></div>
<div class="abs" style="left:786px;top:485px;width:54px;height:2px;background:#f0f0f0"></div>
<div style="position:absolute;left:786px;top:478px;font-size:16px;line-height:18px;white-space:pre;letter-spacing:-0.263px;transform:scaleY(1.045);transform-origin:0 14.5px;">Mobility</div>
<div style="position:absolute;left:820px;top:503px;font-size:16px;line-height:18px;white-space:pre;letter-spacing:-0.103px;transform:scaleY(1.045);transform-origin:0 14.5px;">:<span style="letter-spacing:-1.0px"> </span>4242 m/s</div>
<div style="position:absolute;left:940px;top:503px;font-size:16px;line-height:18px;white-space:pre;letter-spacing:-0.276px;transform:scaleY(1.045);transform-origin:0 14.5px;">:<span style="letter-spacing:-1.0px"> </span>3.1 s</div>
<div style="position:absolute;left:1029px;top:503px;font-size:16px;line-height:18px;white-space:pre;letter-spacing:-0.297px;transform:scaleY(1.045);transform-origin:0 14.5px;">:<span style="letter-spacing:-1.0px"> </span>6 au/s</div>
<div style="position:absolute;left:775px;top:553px;font-size:16px;line-height:18px;white-space:pre;letter-spacing:0.065px;transform:scaleY(1.045);transform-origin:0 14.5px;">Signature: 210 m</div>
<div style="position:absolute;left:924px;top:553px;font-size:16px;line-height:18px;white-space:pre;letter-spacing:-0.256px;transform:scaleY(1.045);transform-origin:0 14.5px;">Price: 0 isk</div>
<div style="position:absolute;left:776px;top:578px;font-size:16px;line-height:18px;white-space:pre;letter-spacing:-0.107px;transform:scaleY(1.045);transform-origin:0 14.5px;">Fleet Commander - right click to set</div>
<div style="position:absolute;left:775px;top:602px;font-size:16px;line-height:18px;white-space:pre;letter-spacing:-0.112px;transform:scaleY(1.045);transform-origin:0 14.5px;">Wing Commander - right click to set</div>
<div style="position:absolute;left:775px;top:627px;font-size:16px;line-height:18px;white-space:pre;letter-spacing:-0.057px;transform:scaleY(1.045);transform-origin:0 14.5px;">Squad Commander - right click to set</div>
<svg width="0" height="0" style="left:0;top:0"><defs>
<filter id="f3" x="-30%" y="-30%" width="160%" height="160%"><feGaussianBlur stdDeviation="0.3"/></filter>
<filter id="f5" x="-30%" y="-30%" width="160%" height="160%"><feGaussianBlur stdDeviation="0.5"/></filter>
<filter id="f8" x="-40%" y="-40%" width="180%" height="180%"><feGaussianBlur stdDeviation="0.8"/></filter>
<filter id="f12" x="-50%" y="-50%" width="200%" height="200%"><feGaussianBlur stdDeviation="1.2"/></filter>
<filter id="f20" x="-50%" y="-50%" width="200%" height="200%"><feGaussianBlur stdDeviation="2"/></filter>
<linearGradient id="gArm" x1="0" y1="1" x2="1" y2="0"><stop offset="0" stop-color="#5e5e5e"/><stop offset="0.4" stop-color="#cfcfcf"/><stop offset="0.7" stop-color="#a2a2a2"/><stop offset="1" stop-color="#6e6e6e"/></linearGradient>
<linearGradient id="gArmS" x1="0" y1="0" x2="1" y2="0"><stop offset="0" stop-color="#3e3e3e"/><stop offset="1" stop-color="#7c7c7c"/></linearGradient>
<radialGradient id="gCpuTop" cx="45%" cy="45%" r="60%"><stop offset="0" stop-color="#58f0c4"/><stop offset="0.6" stop-color="#22a88e"/><stop offset="1" stop-color="#147262"/></radialGradient>
<linearGradient id="gDef" x1="0" y1="0" x2="1" y2="0"><stop offset="0" stop-color="#1c7c6c"/><stop offset="0.12" stop-color="#176a5c"/><stop offset="0.17" stop-color="#d8e6de"/><stop offset="0.38" stop-color="#e6dccc"/><stop offset="0.44" stop-color="#8c5632"/><stop offset="0.6" stop-color="#6a3c1c"/><stop offset="0.66" stop-color="#0c3a32"/><stop offset="0.84" stop-color="#115248"/><stop offset="0.92" stop-color="#2c9c8a"/><stop offset="1" stop-color="#2c9c8a"/></linearGradient>
<radialGradient id="gEm" cx="50%" cy="50%" r="50%"><stop offset="0" stop-color="#2a7896"/><stop offset="0.75" stop-color="#2c7c9a"/><stop offset="1" stop-color="#5aa8c0"/></radialGradient>
<linearGradient id="gMis" x1="0" y1="0" x2="1" y2="0"><stop offset="0" stop-color="#000" stop-opacity="0"/><stop offset="0.45" stop-color="#000" stop-opacity="0.35"/><stop offset="0.8" stop-color="#000" stop-opacity="1"/><stop offset="1" stop-color="#000"/></linearGradient>
<linearGradient id="gRng" x1="0" y1="0" x2="0" y2="1"><stop offset="0" stop-color="#d4dcdc"/><stop offset="1" stop-color="#8a9292"/></linearGradient>
<linearGradient id="gRech" x1="0" y1="0" x2="0" y2="1"><stop offset="0" stop-color="#9c946a"/><stop offset="0.25" stop-color="#efe7bf"/><stop offset="0.55" stop-color="#8c8252"/><stop offset="0.85" stop-color="#4a4428"/><stop offset="1" stop-color="#28261a"/></linearGradient>
<linearGradient id="gSpd" x1="0" y1="0" x2="1" y2="0"><stop offset="0" stop-color="#b04c2c"/><stop offset="0.14" stop-color="#c86a48"/><stop offset="0.24" stop-color="#f8f4ec"/><stop offset="0.46" stop-color="#eef8f8"/><stop offset="0.6" stop-color="#48d4dc"/><stop offset="1" stop-color="#1ea4b4"/></linearGradient>
<radialGradient id="gAlg" cx="62%" cy="66%" r="68%"><stop offset="0" stop-color="#c8ecfa"/><stop offset="0.45" stop-color="#58a6d2"/><stop offset="1" stop-color="#2a6088"/></radialGradient>
<radialGradient id="gTi" cx="45%" cy="55%" r="55%"><stop offset="0" stop-color="#f0f0f6"/><stop offset="0.32" stop-color="#dcdce4"/><stop offset="0.5" stop-color="#4a3e3e"/><stop offset="0.8" stop-color="#3c3232"/><stop offset="1" stop-color="#5a4e4e" stop-opacity="0.2"/></radialGradient>
<linearGradient id="gChk" x1="0" y1="0" x2="0" y2="1"><stop offset="0" stop-color="#c4e870"/><stop offset="0.5" stop-color="#86c83a"/><stop offset="1" stop-color="#4e9a1c"/></linearGradient>
</defs></svg>
<svg style="left:766px;top:56px" width="40" height="34" viewBox="766 56 40 34"><ellipse cx="797.5" cy="75.5" rx="4.5" ry="2.6" fill="#d2d2d6" filter="url(#f12)"/><g filter="url(#f5)"><polygon points="771.3,70.8 784,62.9 785.8,66 772.8,73.6" fill="#dcd8cc" /><polygon points="772,72.7 785.6,65.5 786.8,68.2 774,75.5 771.4,74.7" fill="#2e241a" /><circle cx="772.6" cy="73.8" r="1.5" fill="#16100c"/><path d="M783 66 L787 62.3 L792 61.6 L796.4 64.5 L795.8 69 L793.2 72 L792.8 76.6 L789 77.8 L785.2 76 L783.8 70Z" fill="#4e3e2e"/><polygon points="786,63.4 791,62.1 793.5,63.4 788,65.2" fill="#cfc3ad" /><circle cx="790.6" cy="66.4" r="1.5" fill="#1e140a"/><circle cx="787" cy="69.6" r="1.3" fill="#1e140a"/><circle cx="789.8" cy="72.8" r="1.3" fill="#22160c"/><circle cx="793.8" cy="67" r="1.1" fill="#22160c"/><circle cx="792.6" cy="71" r="0.9" fill="#22160c"/><polygon points="785.5,71 788.5,68 789.5,70 787,73.5" fill="#a4927a" /><polygon points="792,64.6 794.6,64.4 794.4,66 792.4,66" fill="#a89880" /><polygon points="778.6,80.8 783.4,77.4 790.6,77.6 792.4,80.6 788.6,83.9 781.4,83.9" fill="#6e5e50" /><polygon points="780.4,80.2 784,78.2 788,78.6 784.6,81.2" fill="#d8d0c0" /><polygon points="785.6,82.8 789.8,80.2 791.4,81 788.2,83.8" fill="#382a20" /><circle cx="782" cy="82.4" r="1" fill="#22180e"/></g></svg>
<svg style="left:766px;top:92px" width="40" height="34" viewBox="766 92 40 34"><g filter="url(#f8)"><polygon points="772,109.6 786,115.8 799.4,113 797.6,109.6 786.6,112.6 774.6,108.6" fill="#3a3420" /></g><g filter="url(#f5)"><polygon points="774.4,101 783.4,99.8 797.2,102.4 787,103.8" fill="#e6e6e2" /><polygon points="774.4,101 787,103.8 786.6,112.6 775,109.6" fill="#d2d2ce" /><polygon points="787,103.8 797.2,102.4 796.6,110.4 786.6,112.6" fill="#4c4438" /><polygon points="776.2,102.99600000000001 778.5,103.49600000000001 778.5,110.35640000000001 776.2,109.75640000000001" fill="#282828" /><polygon points="779.6,103.744 781.9,104.244 781.9,111.02960000000002 779.6,110.42960000000002" fill="#282828" /><polygon points="783,104.492 785.3,104.992 785.3,111.70280000000001 783,111.10280000000002" fill="#282828" /><line x1="789" y1="111" x2="795.6" y2="105.4" stroke="#dcd4c2" stroke-width="1.3" /></g></svg>
<svg style="left:764px;top:128px" width="40" height="34" viewBox="764 128 40 34"><g filter="url(#f5)"><polygon points="769.8,143.4 772.4,142 796.4,152 796.4,155.4 769.8,147.2" fill="#42424a" /><polygon points="769.8,147.2 796.4,155.4 795,158.4 770.2,149.8" fill="#b0b0b8" /><line x1="780" y1="147.4" x2="788" y2="150.6" stroke="#cacad2" stroke-width="1.1" /><polygon points="791.6,152.4 796.4,152 796.4,157.2 792.6,157.4" fill="#30303a" /><circle cx="780" cy="140.2" r="3.9" fill="#e2e2e8" stroke="#1e1e26" stroke-width="2.9"/><path d="M783.6 138.4 L795 139.2 L796.8 142 L796.2 145.2 L786 146 L783.2 143.4Z" fill="#20263a"/><line x1="787" y1="140.9" x2="794" y2="141.3" stroke="#b0badc" stroke-width="1.2" /><line x1="788.4" y1="143.4" x2="792.6" y2="143.6" stroke="#9ca6ca" stroke-width="1.1" /><line x1="796" y1="144.4" x2="800.8" y2="144.6" stroke="#2a2a32" stroke-width="1.3" /></g></svg>
<svg style="left:866px;top:54px" width="40" height="34" viewBox="866 54 40 34"><g filter="url(#f5)"><polygon points="871.2,71.3 882.5,59.6 898,65.7 892,84.3 872.5,74.8" fill="#0e463e" stroke="#0b2e2a" stroke-width="1" stroke-linejoin="round"/><polygon points="871.6,71 882.5,60 883.3,61.8 878.6,66.6" fill="#2c9c8a" /><polygon points="882.5,60 897.6,65.8 893.7,66.1 883.3,61.8" fill="#125c52" /><polygon points="878.6,66.6 883.3,61.8 893.7,66.1 888.5,72.2" fill="url(#gCpuTop)" /><polygon points="872,72 878.6,66.6 888.5,72.2 890.6,82" fill="#4fb4a6" /><polygon points="888.5,72.2 893.7,66.1 897.6,65.8 892,83.6" fill="#14665a" /><line x1="874" y1="72.4" x2="889" y2="79.6" stroke="#c4f4ec" stroke-width="0.9" /><line x1="876" y1="70.4" x2="889" y2="76.4" stroke="#a8ece0" stroke-width="0.8" /><line x1="878.6" y1="66.6" x2="888.5" y2="72.2" stroke="#0e4a42" stroke-width="1" /><line x1="888.5" y1="72.2" x2="891.4" y2="83" stroke="#0c3c36" stroke-width="1" /><polygon points="871.2,71.3 872.5,74.8 892,84.3 891.2,81.8" fill="#10302c" /></g></svg>
<svg style="left:870px;top:94px" width="30" height="28" viewBox="870 94 30 28"><g fill="none" stroke="#72685e" stroke-width="0.9" filter="url(#f3)"><ellipse cx="884.2" cy="107.3" rx="3.3" ry="10.4"/><ellipse cx="884.2" cy="107.3" rx="10.6" ry="3.5" transform="rotate(33 884.2 107.3)"/><ellipse cx="884.2" cy="107.3" rx="10.6" ry="3.5" transform="rotate(-33 884.2 107.3)"/></g><ellipse cx="884.2" cy="107" rx="2.2" ry="4" fill="#e8dcd0" opacity="0.7" filter="url(#f5)"/><g fill="#3e3228"><circle cx="883" cy="104.6" r="0.7"/><circle cx="885.6" cy="106.2" r="0.7"/><circle cx="883.2" cy="108.4" r="0.7"/><circle cx="884.8" cy="110.6" r="0.6"/></g></svg>
<svg style="left:870px;top:128px" width="32" height="32" viewBox="870 128 32 32"><circle cx="884.2" cy="138.1" r="7.6" fill="#e8ebf5" stroke="#d2d8ea" stroke-width="0.9" opacity="0.8" filter="url(#f5)"/><circle cx="884.2" cy="138.1" r="4.2" fill="#dde3f3" stroke="#bcc6e2" stroke-width="0.9" filter="url(#f5)"/><g filter="url(#f5)"><path d="M878.4 142.6 L884 141 L890.6 142.4 L896.2 146.6 L895 147.8 L889 146 L886.6 150 L884.6 156 L882 155.6 L881.4 149 L877.6 150.8 L876.8 149.6 L881 146.4Z" fill="#383e46"/><polygon points="882.6,146 884.4,146 883.6,153 882.4,153" fill="#c2c6ca" /><line x1="880" y1="143" x2="889" y2="143.4" stroke="#6a7890" stroke-width="1" /></g></svg>
<svg style="left:778px;top:216px" width="40" height="34" viewBox="778 216 40 34"><ellipse cx="792.8" cy="226.6" rx="9.2" ry="6.8" fill="#9adff0" opacity="0.9" filter="url(#f12)"/><polygon points="786,228 801,228 799,238.4 790.6,238.4" fill="#b0e8f6" opacity="0.9" filter="url(#f12)"/><circle cx="790" cy="224.2" r="2.6" fill="#dcfaff" filter="url(#f12)"/><g filter="url(#f5)"><ellipse cx="795.3" cy="239.4" rx="11.2" ry="5.2" fill="#262626"/><path d="M785 241 Q795 246.5 805.6 241" fill="none" stroke="#8c8c8c" stroke-width="1"/><ellipse cx="795.3" cy="238.4" rx="8.6" ry="3.2" fill="#86b4bc"/></g><ellipse cx="795.3" cy="236.8" rx="3.4" ry="3" fill="#d4fcff" filter="url(#f8)"/></svg>
<svg style="left:886px;top:216px" width="40" height="34" viewBox="886 216 40 34"><g filter="url(#f8)"><polygon points="893,236.8 904.6,244.8 914.8,239 907.6,235" fill="url(#gArmS)" /></g><g filter="url(#f3)"><path d="M892 230.7 Q893 226 896 224.2 L900.3 222.9 L913.7 229.4 Q916 231 915.9 233.3 L912.8 232 Q909 231.4 907.6 232.6 Q906 235 905.5 238.5 Z" fill="url(#gArm)"/><polygon points="907.8,232.4 912.8,231.8 915.9,233.3 914,230.4 909,230" fill="#3c3c3c" /><line x1="895" y1="228" x2="907" y2="233.5" stroke="#8c8c8c" stroke-width="0.7" /><line x1="897" y1="225.6" x2="909.6" y2="231.4" stroke="#f0f0f0" stroke-width="0.8" /><path d="M892 230.7 L905.5 238.5 L906 236" fill="none" stroke="#5a5a5a" stroke-width="0.9"/></g></svg>
<svg style="left:994px;top:216px" width="40" height="34" viewBox="994 216 40 34"><ellipse cx="1014" cy="234" rx="10" ry="9.5" fill="#bdb9b4" filter="url(#f12)"/><g filter="url(#f3)"><polygon points="1012.2,222.0 1020.9,227.0 1020.9,237.0 1012.2,242.0 1003.5,237.0 1003.5,227.0" fill="#b8b0a4" stroke="#3a3028" stroke-width="1.3" stroke-linejoin="round"/><polygon points="1020.9,237.0 1012.2,242.0 1003.5,237.0 1012.2,232" fill="#938a7c" /><polygon points="1012.2,222.0 1020.9,227.0 1012.2,232" fill="#cfc8bc" /><polygon points="1012.2,222.0 1003.5,227.0 1012.2,232" fill="#c4bcae" /><line x1="1012.2" y1="232" x2="1020.9" y2="227.0" stroke="#e6ded0" stroke-width="0.9" /><line x1="1012.2" y1="232" x2="1012.2" y2="242.0" stroke="#e6ded0" stroke-width="0.9" /><line x1="1012.2" y1="232" x2="1003.5" y2="227.0" stroke="#e6ded0" stroke-width="0.9" /><line x1="1012.2" y1="232" x2="1012.2" y2="222.0" stroke="#261c14" stroke-width="1.7" /><line x1="1012.2" y1="232" x2="1020.9" y2="237.0" stroke="#261c14" stroke-width="1.7" /><line x1="1012.2" y1="232" x2="1003.5" y2="237.0" stroke="#261c14" stroke-width="1.7" /><circle cx="1012.2" cy="232" r="1.3" fill="#f0ebe2"/></g></svg>
<svg style="left:776px;top:256px" width="40" height="34" viewBox="776 256 40 34"><circle cx="789.2" cy="271" r="7.8" fill="#74bcd2" opacity="0.65" filter="url(#f8)"/><circle cx="789.2" cy="271" r="6.7" fill="url(#gEm)" filter="url(#f5)"/><g filter="url(#f3)"><polygon points="782.6,267.2 790,270 788.4,265.8 796.4,272.8 789.8,272.2 791.4,277 786.2,271.2" fill="#d8faff" /></g><path d="M797.2 261.4 Q798.5 272.6 797.2 283.8 Q796.3000000000001 272.6 797.2 261.4Z" fill="#5e5e5e" stroke="#5e5e5e" stroke-width="0.4" filter="url(#f3)"/><path d="M798.8000000000001 263 Q802.6 272 799.4000000000001 281.6" fill="none" stroke="#a4a4a4" stroke-width="1" filter="url(#f3)"/><path d="M798.6 281.6 L800.6 280" fill="none" stroke="#6c6c6c" stroke-width="1" filter="url(#f3)"/></svg>
<svg style="left:854px;top:256px" width="40" height="34" viewBox="854 256 40 34"><g fill="none" stroke-linecap="round" filter="url(#f5)"><path d="M876.6 267.6 C873 265 870 270.4 866.4 267.4 S863 266.6 861.6 268.4" stroke="#b02c34" stroke-width="2.8"/><path d="M876.6 272 C873 270 870 275 866 272.6 S863 271.6 861.6 273" stroke="#d4381e" stroke-width="3.4"/><path d="M876.6 276.6 C873 275 870 279.4 866.4 277 S863.4 276 862 277.4" stroke="#b42a30" stroke-width="2.8"/></g><ellipse cx="872.6" cy="271.6" rx="4.2" ry="5.2" fill="#f4622a" filter="url(#f8)"/><ellipse cx="874" cy="268.4" rx="1.8" ry="1.4" fill="#ffa070" filter="url(#f5)"/><ellipse cx="874" cy="275.4" rx="1.8" ry="1.4" fill="#ff9060" filter="url(#f5)"/><circle cx="872.4" cy="271" r="1.2" fill="#b85a00" filter="url(#f3)"/><ellipse cx="866.6" cy="269.4" rx="2" ry="1" fill="#f4a4ac" filter="url(#f5)"/><path d="M878.5 261.4 Q879.9 272.6 878.5 283.8 Q877.5 272.6 878.5 261.4Z" fill="#3e6a66" stroke="#3e5a58" stroke-width="0.5" filter="url(#f3)"/><path d="M880.1 263 Q883.9 272 880.7 281.6" fill="none" stroke="#a4a4a4" stroke-width="1" filter="url(#f3)"/><path d="M879.9 281.6 L881.9 280" fill="none" stroke="#6c6c6c" stroke-width="1" filter="url(#f3)"/></svg>
<svg style="left:936px;top:256px" width="40" height="34" viewBox="936 256 40 34"><g filter="url(#f8)"><polygon points="943.6,271.2 956.6,266.4 957.2,276.4 950,274.4" fill="#a8a8a8" /><polygon points="949.6,266 957,264.2 957,269.4" fill="#8c8c8c" /></g><g filter="url(#f5)"><line x1="944.4" y1="271.2" x2="952" y2="273.2" stroke="#5c5c5c" stroke-width="1.7" /><line x1="952.4" y1="276.6" x2="955.8" y2="273.8" stroke="#262626" stroke-width="1.7" /><circle cx="954.2" cy="272" r="1.9" fill="#ffffff"/></g><path d="M958.3 261.4 Q959.5999999999999 272.6 958.3 283.8 Q957.4 272.6 958.3 261.4Z" fill="#5e5e5e" stroke="#5e5e5e" stroke-width="0.4" filter="url(#f3)"/><path d="M959.9 263 Q963.6999999999999 272 960.5 281.6" fill="none" stroke="#a4a4a4" stroke-width="1" filter="url(#f3)"/><path d="M959.6999999999999 281.6 L961.6999999999999 280" fill="none" stroke="#6c6c6c" stroke-width="1" filter="url(#f3)"/></svg>
<svg style="left:1014px;top:256px" width="40" height="34" viewBox="1014 256 40 34"><rect x="1024.2" y="264.8" width="12.8" height="15.4" rx="2" fill="#5a3814" filter="url(#f8)"/><rect x="1025" y="266" width="4" height="4" fill="#2a1808" filter="url(#f8)"/><rect x="1032" y="276" width="4.6" height="3.6" fill="#2a1606" filter="url(#f8)"/><circle cx="1032" cy="273" r="4.8" fill="#e48a2c" filter="url(#f8)"/><circle cx="1032.2" cy="272.9" r="2.9" fill="#fff6dc" filter="url(#f5)"/><rect x="1025" y="280.4" width="12" height="3" fill="#d8e8f8" opacity="0.7" filter="url(#f8)"/><path d="M1038.5 261.4 Q1039.9 272.6 1038.5 283.8 Q1037.5 272.6 1038.5 261.4Z" fill="#4a5258" stroke="#4a4a4a" stroke-width="0.5" filter="url(#f3)"/><path d="M1040.1 263 Q1043.9 272 1040.7 281.6" fill="none" stroke="#a4a4a4" stroke-width="1" filter="url(#f3)"/><path d="M1039.9 281.6 L1041.9 280" fill="none" stroke="#6c6c6c" stroke-width="1" filter="url(#f3)"/></svg>
<svg style="left:780px;top:322px" width="36" height="32" viewBox="780 322 36 32"><path d="M791 329.6 L806.2 329.6 L806.2 339.6 Q806 347.4 798.6 347.6 Q791.2 347.4 791 339.6 Z" fill="#8eeadc" stroke="#8eeadc" stroke-width="4.6" opacity="0.8" filter="url(#f12)"/><path d="M791 329.6 L806.2 329.6 L806.2 339.6 Q806 347.4 798.6 347.6 Q791.2 347.4 791 339.6 Z" fill="url(#gDef)" stroke="#1a7868" stroke-width="0.9" filter="url(#f5)"/><path d="M792 340 Q792.4 346.4 798.6 346.6 Q804.8 346.4 805.2 340" fill="none" stroke="#1f8a78" stroke-width="1.9" filter="url(#f5)"/><path d="M791.4 330.2 Q798.6 331.4 805.8 330.2" fill="none" stroke="#15584c" stroke-width="1.4" filter="url(#f5)"/></svg>
<svg style="left:904px;top:322px" width="30" height="30" viewBox="904 322 30 30"><g filter="url(#f3)"><polygon points="918.3,325.9 924.3,329 927.4,332.8 919.6,346.2 910,339.3" fill="#ecdcbc" /><polygon points="918.6,327.6 923,329.8 916.4,343.4 912.6,340.6" fill="#36200e" /><polygon points="917.4,326.4 919.6,327.4 912.6,340.4 910.4,339.2" fill="#f8ecd0" /><line x1="917.8" y1="325.8" x2="909.8" y2="339.2" stroke="#2a1808" stroke-width="1" /><polygon points="918.3,325.9 924.3,329 923.4,330.6 918,327.8" fill="#f4ece0" /><polygon points="921,330 923.4,330.8 921,334.4" fill="#36200e" /><polygon points="923.6,336 926,336.6 921.4,343.6 921.6,339.2" fill="#4a3218" /><line x1="927.6" y1="333" x2="919.8" y2="346.4" stroke="#6e5e46" stroke-width="0.9" /><line x1="910" y1="339.4" x2="919.6" y2="346.3" stroke="#4e3a24" stroke-width="1" /></g></svg>
<svg style="left:1014px;top:320px" width="40" height="34" viewBox="1014 320 40 34"><g transform="rotate(32 1032 337)"><rect x="1021.6" y="339.6" width="19" height="5.6" rx="2.2" fill="#1e1c12" filter="url(#f5)"/><rect x="1021.2" y="330.6" width="21.2" height="12.6" rx="5.4" fill="url(#gRech)" filter="url(#f3)"/><ellipse cx="1039" cy="337.2" rx="3" ry="5" fill="#cfcfc5" filter="url(#f5)"/><ellipse cx="1039.4" cy="337" rx="1.4" ry="3" fill="#ecece6" filter="url(#f5)"/><rect x="1034.2" y="331" width="1.1" height="12" fill="#3e3a26" opacity="0.8"/><rect x="1022" y="331.4" width="3" height="10" rx="1.5" fill="#4e4830" opacity="0.7" filter="url(#f5)"/></g><ellipse cx="1042.4" cy="338.6" rx="2.6" ry="2" fill="#909090" opacity="0.7" filter="url(#f8)"/></svg>
<svg style="left:778px;top:386px" width="40" height="34" viewBox="778 386 40 34"><ellipse cx="806.5" cy="401" rx="4.6" ry="3" fill="#c0c0c0" filter="url(#f12)"/><ellipse cx="789" cy="403" rx="4" ry="1.6" fill="#c8c8c8" filter="url(#f12)"/><g filter="url(#f3)"><polygon points="782,396.4 796.6,394.8 797,396.6 782.4,398.6" fill="#c6cace" /><polygon points="782.4,398.6 797,396.6 797,398.4 785.4,401 783,400.2" fill="#3a3e42" /><polygon points="793,392.6 798,391 804.6,392.4 805,396.6 800,397.6 796,395.6" fill="#d6dade" stroke="#3a3e42" stroke-width="0.9"/><polygon points="801.6,393 804.8,393.6 804.8,396.6 802,396" fill="#282c30" /><polygon points="793.4,393 796,391.8 797,394 794.6,395" fill="#4a4e52" /><polygon points="796,397 800.6,397 801.6,404 797.4,404.6" fill="#463c32" /><polygon points="796.4,403 799.6,402.4 799.6,405.6 796.4,406" fill="#eaeae6" /><polygon points="791,406 797,403.6 804,406 803.6,409.6 796.6,412 791.4,409.6" fill="#868c90" /><polygon points="798,407 803.6,406.3 803,409.2 797.6,411.2" fill="#d2d6da" /><line x1="792.0" y1="406.4" x2="792.0" y2="410.0" stroke="#4a5054" stroke-width="0.9" /><line x1="793.8" y1="406.59999999999997" x2="793.8" y2="410.6" stroke="#4a5054" stroke-width="0.9" /><line x1="795.6" y1="406.79999999999995" x2="795.6" y2="411.2" stroke="#4a5054" stroke-width="0.9" /></g></svg>
<svg style="left:778px;top:424px" width="40" height="34" viewBox="778 424 40 34"><path d="M787 433.4 Q795.5 431.5 802.4 431.5 Q804.2 431.59999999999997 804.2 433.4 Q804.2 435.29999999999995 802 435.29999999999995 Q795.5 434.79999999999995 787 433.4Z" fill="url(#gMis)" filter="url(#f3)"/><ellipse cx="800.6" cy="430.9" rx="3" ry="0.9" fill="#dfe6e6" filter="url(#f5)"/><path d="M793.4 439.4 Q801.2 437.5 807.4 437.5 Q809.2 437.59999999999997 809.2 439.4 Q809.2 441.29999999999995 807 441.29999999999995 Q801.2 440.79999999999995 793.4 439.4Z" fill="url(#gMis)" filter="url(#f3)"/><ellipse cx="805.6" cy="436.9" rx="3" ry="0.9" fill="#dfe6e6" filter="url(#f5)"/><path d="M787 445.4 Q793.5 443.5 798.4 443.5 Q800.2 443.59999999999997 800.2 445.4 Q800.2 447.29999999999995 798 447.29999999999995 Q793.5 446.79999999999995 787 445.4Z" fill="url(#gMis)" filter="url(#f3)"/><ellipse cx="796.6" cy="442.9" rx="3" ry="0.9" fill="#dfe6e6" filter="url(#f5)"/></svg>
<svg style="left:904px;top:386px" width="40" height="34" viewBox="904 386 40 34"><circle cx="918.3" cy="401.6" r="10.4" fill="#e6ecee" stroke="url(#gRng)" stroke-width="1.1" filter="url(#f3)"/><path d="M918.3 401.6 L908.6 398 A10.3 10.3 0 0 1 921.4 391.8 Z" fill="#c0dfe4" filter="url(#f5)"/><path d="M909.6 407.6 A10.4 10.4 0 0 0 926 408.6" fill="none" stroke="#808888" stroke-width="1.2" filter="url(#f5)"/><line x1="917.4" y1="403.7" x2="926.5" y2="393.4" stroke="#26303a" stroke-width="1.3" filter="url(#f3)"/></svg>
<svg style="left:904px;top:424px" width="40" height="34" viewBox="904 424 40 34"><g filter="url(#f5)"><polygon points="912,436 915.3,429.6 917,435 920.6,431.6 926,440 922,446 915,441.4" fill="#aa8a62" /><path d="M920.5 431.5 Q929 436 927.8 443.5 Q926 447 922 446.5 Q926 441 920.5 431.5Z" fill="#f6eede"/><path d="M927.9 442.6 Q926.4 447.6 921.6 447" fill="none" stroke="#6c6c6c" stroke-width="1.3"/><polygon points="913,437 919,441 916,443.2 911.6,440" fill="#46301a" /><line x1="908.3" y1="440.5" x2="913" y2="439" stroke="#281a0e" stroke-width="1.6" /><line x1="910" y1="446.5" x2="914" y2="441.6" stroke="#38281a" stroke-width="1.2" /><line x1="913.6" y1="447" x2="915.6" y2="442" stroke="#38281a" stroke-width="1.1" /><line x1="915.3" y1="430" x2="915.8" y2="437" stroke="#5a4630" stroke-width="1" /><line x1="913" y1="434" x2="925" y2="437.4" stroke="#e0d0b0" stroke-width="0.8" /><line x1="917" y1="440" x2="925.4" y2="433.6" stroke="#c8b48c" stroke-width="0.8" /></g></svg>
<svg style="left:1024px;top:386px" width="40" height="34" viewBox="1024 386 40 34"><g filter="url(#f3)"><circle cx="1043" cy="402" r="9.3" fill="#cac2b9" stroke="#86827c" stroke-width="1.6"/><path d="M1034.6 406 A9.3 9.3 0 0 0 1051.4 406" fill="none" stroke="#66625c" stroke-width="1.4"/><circle cx="1043" cy="402" r="6.2" fill="#d5cdc5" stroke="#a69e96" stroke-width="0.8"/><line x1="1043" y1="389.6" x2="1043" y2="393.6" stroke="#74706a" stroke-width="1.7" /><line x1="1043" y1="410.4" x2="1043" y2="413.2" stroke="#74706a" stroke-width="1.7" /><line x1="1030.8" y1="402" x2="1035" y2="402" stroke="#74706a" stroke-width="1.7" /><line x1="1051" y1="402" x2="1055.2" y2="402" stroke="#74706a" stroke-width="1.7" /><line x1="1043" y1="396" x2="1043" y2="408" stroke="#989289" stroke-width="0.8" /><line x1="1037" y1="402" x2="1049" y2="402" stroke="#989289" stroke-width="0.8" /><circle cx="1041" cy="400.4" r="1.6" fill="#f6f6fa"/></g></svg>
<svg style="left:1028px;top:424px" width="32" height="30" viewBox="1028 424 32 30"><g filter="url(#f3)"><circle cx="1043.9" cy="438.7" r="9.7" fill="#e8ecee" stroke="#8c9092" stroke-width="1"/><circle cx="1043.9" cy="438.7" r="5.6" fill="#eef2f4" stroke="#3a4244" stroke-width="1.4"/><circle cx="1043.9" cy="438.7" r="2.8" fill="#f4f4f4" stroke="#1a1a1a" stroke-width="1.6" stroke-dasharray="14 3.6" transform="rotate(-40 1043.9 438.7)"/></g></svg>
<svg style="left:776px;top:490px" width="34" height="30" viewBox="776 490 34 30"><g transform="rotate(38 792 505)"><rect x="782.6" y="506" width="18" height="5.4" rx="2.6" fill="#261c1c" filter="url(#f5)"/><rect x="782" y="499.2" width="20" height="11" rx="5.2" fill="url(#gSpd)" filter="url(#f3)"/><ellipse cx="795.6" cy="503" rx="3" ry="1.5" fill="#b4fcff" filter="url(#f5)"/><rect x="788" y="499.4" width="0.9" height="10" fill="#a8b4b4" opacity="0.8"/></g><ellipse cx="800.6" cy="510" rx="2.6" ry="2.2" fill="#7ce4ec" opacity="0.7" filter="url(#f8)"/></svg>
<svg style="left:892px;top:486px" width="40" height="34" viewBox="892 486 40 34"><g filter="url(#f3)"><polygon points="896.8,515.8 903.4,508 916.6,508 924,512.2 919.8,515.8" fill="#5f94b6" /><polygon points="916.4,508.6 924.2,512.2 919.6,516" fill="#3a6c8c" /><line x1="902.0" y1="509" x2="900.6" y2="515.6" stroke="#d6eaf6" stroke-width="1" /><line x1="905.6" y1="509" x2="904.2" y2="515.6" stroke="#d6eaf6" stroke-width="1" /><line x1="909.1999999999999" y1="509" x2="907.8" y2="515.6" stroke="#d6eaf6" stroke-width="1" /><line x1="912.8" y1="509" x2="911.4" y2="515.6" stroke="#d6eaf6" stroke-width="1" /><line x1="916.4" y1="509" x2="915" y2="515.6" stroke="#d6eaf6" stroke-width="1" /><line x1="919.6" y1="509" x2="918.2" y2="515.6" stroke="#d6eaf6" stroke-width="1" /><circle cx="909.7" cy="503" r="6.9" fill="url(#gAlg)" stroke="#2a5878" stroke-width="1.1"/><path d="M905 500.6 A5.4 5.4 0 0 1 913 498.6" fill="none" stroke="#d8f0fc" stroke-width="1" opacity="0.8"/><rect x="908.8" y="491" width="1.9" height="5" fill="#3a4a58"/><rect x="907.8" y="490.6" width="3.9" height="1.4" fill="#4a5a68"/><line x1="901.6" y1="495.6" x2="905" y2="498.8" stroke="#4a5a68" stroke-width="1.6" /><line x1="909.7" y1="503.4" x2="909.5" y2="498" stroke="#0e2638" stroke-width="1.1" /></g></svg>
<svg style="left:984px;top:488px" width="40" height="34" viewBox="984 488 40 34"><ellipse cx="998" cy="499" rx="6" ry="4" fill="#a4f0e4" opacity="0.7" filter="url(#f12)"/><defs><clipPath id="cpW"><rect x="993" y="499.5" width="20" height="13" rx="6" transform="rotate(36 1003 506)"/></clipPath></defs><g clip-path="url(#cpW)" filter="url(#f5)"><polygon points="999.6,493.7 1001.9,495.3 992.5,508.2 990.2,506.6" fill="#9aecdc" /><polygon points="1001.9,495.3 1003.3,496.4 993.9,509.3 992.5,508.2" fill="#3c9a82" /><polygon points="1003.3,496.4 1006.7,498.8 997.3,511.8 993.9,509.3" fill="#6edec6" /><polygon points="1006.7,498.8 1008.0,499.8 998.6,512.7 997.3,511.8" fill="#38786a" /><polygon points="1008.0,499.8 1009.6,500.9 1000.2,513.9 998.6,512.7" fill="#d8a098" /><polygon points="1009.6,500.9 1012.1,502.7 1002.7,515.6 1000.2,513.9" fill="#e6dab2" /><polygon points="1012.1,502.7 1013.7,503.9 1004.3,516.8 1002.7,515.6" fill="#8c866a" /><polygon points="1013.7,503.9 1015.8,505.4 1006.4,518.3 1004.3,516.8" fill="#4a4a44" /><polygon points="997.6,496.4 1013.8,508.2 1012.6,509.8 996.4,498.0" fill="#ffffff" opacity="0.45"/><polygon points="992.9,502.9 1009.1,514.6 1006.4,518.3 990.2,506.6" fill="#3a3224" opacity="0.55"/></g></svg>
</div></body></html>
